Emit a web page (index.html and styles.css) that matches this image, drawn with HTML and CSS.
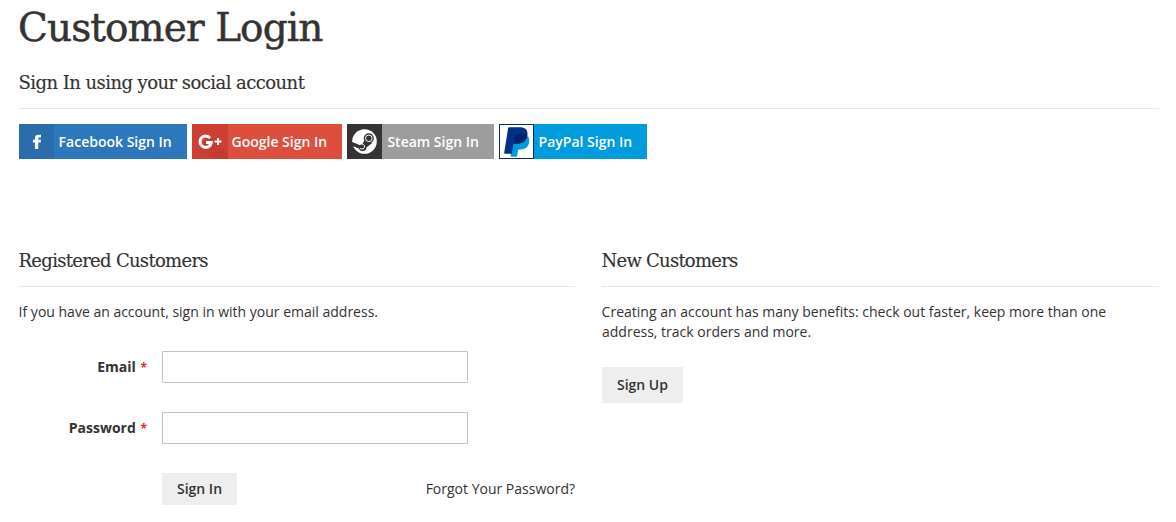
FILE: index.html
```
<!DOCTYPE html>
<html lang="en">
<head>
<meta charset="utf-8">
<title>Customer Login</title>
<link rel="stylesheet" href="styles.css">
</head>
<body>
<main class="page">
  <h1 class="page-title"><span class="title-text">Customer Login</span></h1>
  <section class="social">
    <h2 class="block-title"><span class="t-social">Sign In using your social account</span></h2>
    <div class="social-list">
      <a class="social-btn facebook">
        <span class="social-icon"><svg viewBox="0 0 35 35"><path fill="#fff" d="M15.900 25v-6.600h-2v-2.700h2v-1.500c0-2.300 1.300-3.400 3.300-3.400h2.800v2.700h-1.500c-.9 0-1.200.4-1.200 1.200v1h2.700l-.4 2.700h-2.300V25z"/></svg></span>
        <span class="social-label">Facebook Sign In</span>
      </a>
      <a class="social-btn google">
        <span class="social-icon"><svg viewBox="0 0 36 35"><path fill="#c23c2f" d="M8 22 18 12 36 29v6H21z"/><path fill="none" stroke="#fff" stroke-width="3" d="M18.100 14.100A5.700 5.700 0 1 0 19.300 18.500H14"/><path fill="none" stroke="#fff" stroke-width="1.900" d="M22.500 17.500h7M26 14v7"/></svg></span>
        <span class="social-label">Google Sign In</span>
      </a>
      <a class="social-btn steam">
        <span class="social-icon"><svg viewBox="0 0 35 35"><circle cx="17.500" cy="17.500" r="12.300" fill="#fff"/><path fill="#353334" d="M4.500 17.800 12.500 21.100a4.200 4.200 0 0 1 2.600-.7l2.700-4.300 7.600 3-5.800 4.200a4.100 4.100 0 0 1-7.900 1.300L4.800 21.800z"/><circle cx="21.800" cy="14.300" r="5" fill="#353334"/><circle cx="21.800" cy="14.300" r="3.300" fill="none" stroke="#fff" stroke-width="1"/><path fill="none" stroke="#fff" stroke-width="1" d="M12.900 24.400l1.500.6a2.500 2.500 0 0 0 2-4.500l-1.300-.5"/></svg></span>
        <span class="social-label">Steam Sign In</span>
      </a>
      <a class="social-btn paypal">
        <span class="social-icon"><svg viewBox="1 1 33 33"><path fill="#009cde" d="M15 11h11.800c2.800 1.300 4.100 3.700 3.400 7.300-.9 5-4.200 7.100-8.700 7.100h-1.300c-.7 0-1.100.4-1.200 1.100l-.9 5.200c-.1.700-.5 1-1.200 1h-4.600c-.5 0-.8-.3-.7-.9z"/><path fill="#003087" d="M10.100 3.200h10.800c5.200 0 8.200 2.600 7.500 7.600-.8 6.100-4.500 8.900-10.100 8.900h-2.700c-.8 0-1.200.5-1.400 1.300l-1.400 8.700H6c-.6 0-.9-.4-.8-1L9.100 4.200c.1-.6.4-1 1-1z"/><path fill="#012169" d="M16.100 11.300c.1-.7.500-1 1.100-1h8.700c1 0 1.800.2 2.500.5-.8 6.100-4.500 8.900-10.100 8.900h-2.700c-.4 0-.7.2-.9.500z"/></svg></span>
        <span class="social-label">PayPal Sign In</span>
      </a>
    </div>
  </section>
  <div class="columns">
    <section class="column">
      <h2 class="block-title"><span class="t-registered">Registered Customers</span></h2>
      <p class="note">If you have an account, sign in with your email address.</p>
      <form class="login-form">
        <div class="field"><label class="label" for="email">Email <span class="required">*</span></label><input class="input" id="email" type="email"></div>
        <div class="field"><label class="label" for="password">Password <span class="required">*</span></label><input class="input" id="password" type="password"></div>
        <div class="actions"><button class="btn btn-signin" type="button">Sign In</button><a class="forgot">Forgot Your Password?</a></div>
      </form>
    </section>
    <section class="column">
      <h2 class="block-title"><span class="t-new">New Customers</span></h2>
      <p class="note">Creating an account has many benefits: check out faster, keep more than one address, track orders and more.</p>
      <button class="btn btn-signup" type="button">Sign Up</button>
    </section>
  </div>
</main>
</body>
</html>
```
FILE: styles.css
```
* { box-sizing: border-box; }
body { margin: 0; background: #fff; color: #333; font: 14px/20px "Open Sans", sans-serif; }
.page { padding: 0 17px 0 19px; height: 522px; overflow: hidden; }
.page-title { margin: 0; height: 70px; padding-top: 4px; font: 400 39px/48px "DejaVu Serif", serif; text-indent: -1px; white-space: nowrap; -webkit-text-stroke: 0.5px #333; }
.title-text { letter-spacing: -0.9px; }
.block-title { margin: 0; height: 39px; border-bottom: 1px solid #e8e8e8; font: 400 18px/26px "DejaVu Serif", serif; text-indent: -0.5px; white-space: nowrap; -webkit-text-stroke: 0.15px #333; }
.t-social { letter-spacing: -0.55px; }
.t-registered { letter-spacing: -0.7px; }
.t-new { letter-spacing: -0.75px; }
.social { height: 178px; }
.social-list { display: flex; gap: 5px; margin-top: 15px; }
.social-btn { display: flex; height: 35px; color: #fff; font-weight: 600; line-height: 35px; white-space: nowrap; }
.social-icon { width: 35px; height: 35px; flex: none; }
.social-icon svg { display: block; width: 100%; height: 100%; }
.social-label { padding-left: 4.6px; }
.facebook { width: 168px; background: #2d77bd; }
.facebook .social-icon { background: #2a6cac; }
.google { width: 150px; background: #dd4e3c; }
.google .social-icon { width: 36px; background: #cb4033; }
.google .social-label { padding-left: 3.5px; }
.steam { width: 147px; background: #9d9d9d; }
.steam .social-icon { background: #353334; }
.steam .social-label { padding-left: 5.4px; }
.paypal { width: 148px; background: #009cde; }
.paypal .social-icon { background: #fff; border: 1px solid #0b2f5c; }
.columns { display: grid; grid-template-columns: 556px 557px; column-gap: 27px; }
.note { margin: 15px 0 0; text-indent: -0.4px; }
.login-form { margin-top: 29px; }
.field { display: flex; align-items: center; margin-bottom: 29px; }
.label { width: 143px; padding-right: 15px; text-align: right; font-weight: 700; white-space: nowrap; }
.required { margin-left: 1px; color: #e02b27; font-size: 12px; font-weight: 700; }
.input { width: 306px; height: 32px; padding: 0 9px; border: 1px solid #c2c2c2; border-radius: 1px; background: #fff; font: inherit; }
.actions { display: flex; justify-content: space-between; align-items: center; padding-left: 143px; }
.btn { padding: 0; border: 0; background: #eee; color: #333; font: 600 14px/20px "Open Sans", sans-serif; }
.btn-signin { width: 75px; height: 32px; }
.btn-signup { width: 81px; height: 36px; margin-top: 25px; }
```
